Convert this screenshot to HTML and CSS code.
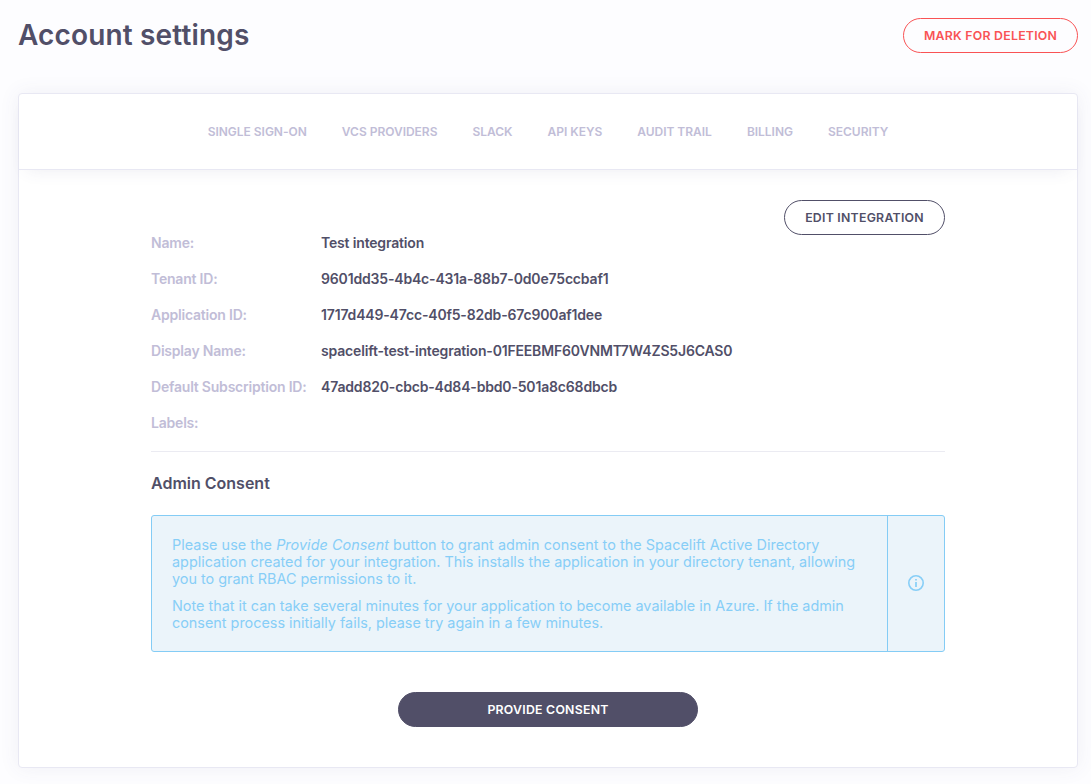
FILE: index.html
```html
<!DOCTYPE html>
<html lang="en">
<head>
<meta charset="utf-8">
<title>Account settings</title>
<link rel="stylesheet" href="styles.css">
</head>
<body>
<header class="header">
  <h1 class="title">Account settings</h1>
  <button class="btn btn-danger">MARK FOR DELETION</button>
</header>
<main class="card">
  <nav class="tabs">
    <a>SINGLE SIGN-ON</a><a>VCS PROVIDERS</a><a>SLACK</a><a>API KEYS</a><a>AUDIT TRAIL</a><a>BILLING</a><a>SECURITY</a>
  </nav>
  <div class="content">
    <button class="btn btn-edit">EDIT INTEGRATION</button>
    <dl class="details">
      <dt>Name:</dt><dd>Test integration</dd>
      <dt>Tenant ID:</dt><dd>9601dd35-4b4c-431a-88b7-0d0e75ccbaf1</dd>
      <dt>Application ID:</dt><dd>1717d449-47cc-40f5-82db-67c900af1dee</dd>
      <dt>Display Name:</dt><dd>spacelift-test-integration-01FEEBMF60VNMT7W4ZS5J6CAS0</dd>
      <dt>Default Subscription ID:</dt><dd>47add820-cbcb-4d84-bbd0-501a8c68dbcb</dd>
      <dt>Labels:</dt><dd></dd>
    </dl>
    <h2 class="subtitle">Admin Consent</h2>
    <section class="notice">
      <div class="notice-text">
        <p><span class="lead">Please use the <em>Provide Consent</em> button to grant admin consent to the Spacelift Active Directory</span><br>application created for your integration. This installs the application in your directory tenant, allowing<br>you to grant RBAC permissions to it.</p>
        <p>Note that it can take several minutes for your application to become available in Azure. If the admin<br>consent process initially fails, please try again in a few minutes.</p>
      </div>
      <div class="notice-icon">
        <svg width="16" height="16" viewBox="0 0 16 16" fill="none" stroke="currentColor" stroke-width="1.6"><circle cx="8" cy="8" r="7.2"/><path d="M8 7v5M8 4v1.6" stroke-width="1.7"/></svg>
      </div>
    </section>
    <button class="btn btn-primary">PROVIDE CONSENT</button>
  </div>
</main>
</body>
</html>
```

FILE: styles.css
```css
* { box-sizing: border-box; }
body { margin: 0; padding: 18px 13px 16px 18px; height: 784px; overflow: hidden; background: #fdfdff; color: #514f68; font-family: Inter, sans-serif; }
.header { display: flex; justify-content: space-between; align-items: flex-start; height: 35px; }
.title { margin: 0; font-size: 28px; font-weight: 600; line-height: 34px; letter-spacing: .15px; }
.btn { display: block; height: 35px; padding: 0 20px; border: 1px solid; border-radius: 18px; background: #fff; font: 600 12.3px/15px Inter, sans-serif; letter-spacing: .25px; white-space: nowrap; }
.btn-danger { width: 175px; background: transparent; color: #f95355; }
.card { margin-top: 40px; height: 675px; border: 1px solid #e8e8f3; border-radius: 4px; background: #fff; box-shadow: 0 0 20px rgba(81, 79, 124, .08); }
.tabs { display: flex; justify-content: center; align-items: center; gap: 35px; height: 76px; border-bottom: 1px solid #e8e8f3; box-shadow: 0 8px 16px -8px rgba(81, 79, 124, .11); color: #c1bdd7; font-size: 12px; font-weight: 600; line-height: 15px; letter-spacing: -.02px; }
.content { width: 794px; margin: 0 auto; padding-top: 30px; }
.btn-edit { width: 161px; margin-left: auto; color: #514f68; }
.details { display: grid; grid-template-columns: 155px 1fr; column-gap: 15px; row-gap: 19px; margin: -1px 0 0; padding-bottom: 20px; border-bottom: 1px solid #ebebf2; font-size: 14px; font-weight: 600; line-height: 17px; letter-spacing: -.17px; white-space: nowrap; }
.details dt { color: #c1bdd7; letter-spacing: -.21px; }
.details dd { margin: 0; }
.subtitle { margin: 22px 0; font-size: 16px; font-weight: 600; line-height: 19px; }
.notice { display: flex; height: 137px; border: 1px solid #84ccf5; border-radius: 3px; background: #ebf4fa; color: #87cef7; }
.notice-text { flex: 1; padding: 20px; font-size: 14.4px; line-height: 17px; white-space: nowrap; }
.notice-text p { margin: 0 0 10px; }
.lead { letter-spacing: .04px; }
.notice-icon { display: flex; align-items: center; justify-content: center; width: 57px; padding-bottom: 2px; border-left: 1px solid #84ccf5; }
.btn-primary { width: 300px; margin: 40px auto 0; border-color: #514f68; background: #514f68; color: #fff; }
```
